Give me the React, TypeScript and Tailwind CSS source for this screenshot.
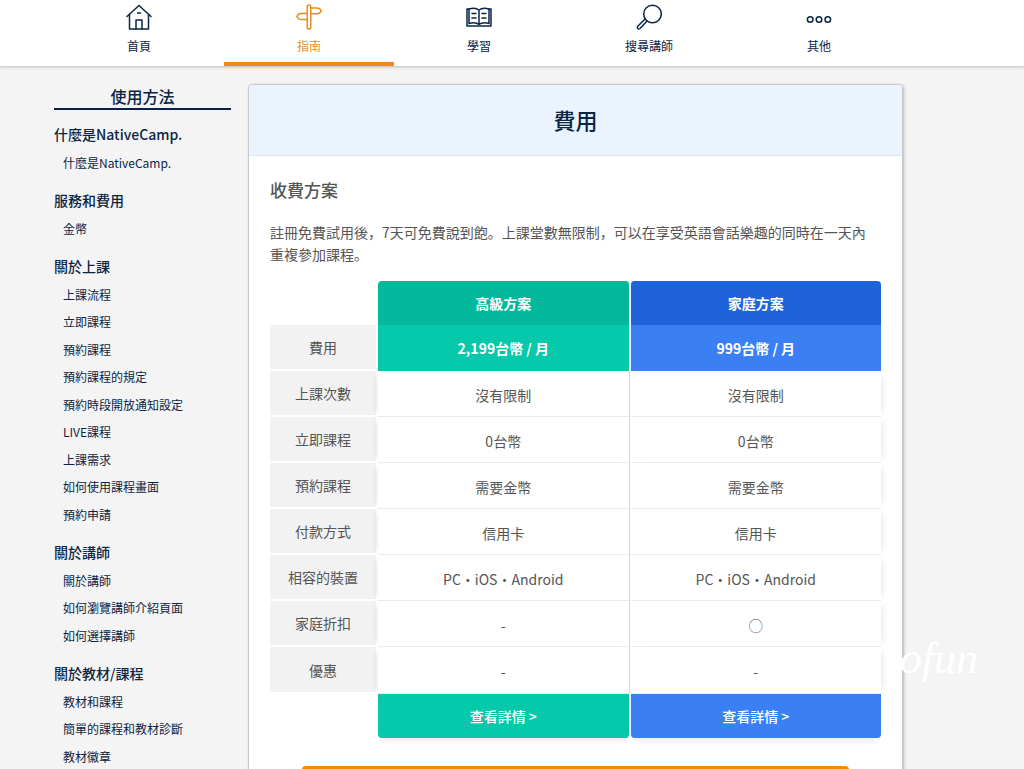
import type { ReactNode } from "react";
import { clsx } from "clsx";

interface NavItem {
  label: string;
  icon: ReactNode;
  active?: boolean;
}

interface MenuGroup {
  title: string;
  items: string[];
}

interface PlanRow {
  label: string;
  premium: string;
  family: string;
}

const navItems: NavItem[] = [
  {
    label: "首頁",
    icon: (
      <>
        <path d="M1 12.5 13 1.5l12 11" />
        <path d="M3.5 10.5V25h19V10.5" />
        <path d="M10 25v-9h6v9" />
        <path d="M11.5 9h3" />
      </>
    ),
  },
  {
    label: "指南",
    active: true,
    icon: (
      <>
        <rect x="11.2" y="1" width="3.6" height="24" rx="1.8" />
        <path d="M14.800 4h6.200c2.200 0 3.400 1.200 4.200 2.800-1 2-2 3-4.200 3h-6.200" />
        <path d="M11.200 9.500H5c-2.200 0-3.400 1.200-4.200 3 1 1.800 2 2.900 4.200 2.900h6.200" />
      </>
    ),
  },
  {
    label: "學習",
    icon: (
      <>
        <path d="M3 5H1v17h24V5h-2" />
        <path d="M13 6c-2.500-2-6.500-2-10-1v14.500c3.500-1 7.500-1 10 1 2.500-2 6.500-2 10-1V5c-3.500-1-7.500-1-10 1v14.500" />
        <path d="M6 9.500h4M6 14h4M16 9.500h4M16 14h4" />
      </>
    ),
  },
  {
    label: "搜尋講師",
    icon: (
      <>
        <circle cx="16.500" cy="10" r="8.800" />
        <path d="M9 15l-7.200 7.300c-1.200 1.600.6 3.400 2.200 2.200L11 17" />
      </>
    ),
  },
  {
    label: "其他",
    icon: (
      <>
        <circle cx="4.200" cy="15.500" r="2.800" />
        <circle cx="13" cy="15.500" r="2.800" />
        <circle cx="21.800" cy="15.500" r="2.800" />
      </>
    ),
  },
];

const menuGroups: MenuGroup[] = [
  { title: "什麼是NativeCamp.", items: ["什麼是NativeCamp."] },
  { title: "服務和費用", items: ["金幣"] },
  {
    title: "關於上課",
    items: [
      "上課流程",
      "立即課程",
      "預約課程",
      "預約課程的規定",
      "預約時段開放通知設定",
      "LIVE課程",
      "上課需求",
      "如何使用課程畫面",
      "預約申請",
    ],
  },
  { title: "關於講師", items: ["關於講師", "如何瀏覽講師介紹頁面", "如何選擇講師"] },
  { title: "關於教材/課程", items: ["教材和課程", "簡單的課程和教材診斷", "教材徽章"] },
];

const planRows: PlanRow[] = [
  { label: "上課次數", premium: "沒有限制", family: "沒有限制" },
  { label: "立即課程", premium: "0台幣", family: "0台幣" },
  { label: "預約課程", premium: "需要金幣", family: "需要金幣" },
  { label: "付款方式", premium: "信用卡", family: "信用卡" },
  { label: "相容的裝置", premium: "PC・iOS・Android", family: "PC・iOS・Android" },
  { label: "家庭折扣", premium: "-", family: "◯" },
  { label: "優惠", premium: "-", family: "-" },
];

const labelCell = "border-b-2 border-r-2 border-white bg-[#f2f2f2] p-0 font-normal";
const premiumCell =
  "border-b border-r border-b-[#ececec] border-r-[#d4d4d4] bg-white p-0 pt-0.5 shadow-[-5px_0_7px_-5px_rgba(0,0,0,0.15)]";
const familyCell =
  "border-b border-l border-b-[#ececec] border-l-white bg-white p-0 pt-0.5 shadow-[5px_0_7px_-5px_rgba(0,0,0,0.15)]";

function GlobalNav() {
  return (
    <header className="border-b border-[#cfcfcf] bg-white pl-[54px] pr-[120px] shadow-sm">
      <nav className="grid grid-cols-5">
        {navItems.map((item) => (
          <a
            key={item.label}
            href="#"
            className={clsx(
              "flex h-[66px] flex-col items-center border-b-4 pt-1 text-xs",
              item.active
                ? "border-[#f0891a] text-[#e8901f]"
                : "border-transparent text-[#0b2545]"
            )}
          >
            <svg
              viewBox="0 0 26 26"
              className="h-[26px] w-[26px]"
              fill="none"
              stroke="currentColor"
              strokeWidth="1.5"
              strokeLinecap="round"
              strokeLinejoin="round"
              aria-hidden="true"
            >
              {item.icon}
            </svg>
            <span className="mt-2 leading-4">{item.label}</span>
          </a>
        ))}
      </nav>
    </header>
  );
}

function SideMenu() {
  return (
    <aside className="w-[177px] shrink-0 text-[#0b2545]">
      <h2 className="border-b-2 border-[#0b1f48] text-center text-base font-medium leading-6">
        使用方法
      </h2>
      {menuGroups.map((group) => (
        <section key={group.title} className="pt-3">
          <h3 className="text-sm font-medium leading-6">{group.title}</h3>
          <ul className="pl-[9px] pt-[3px] text-xs">
            {group.items.map((item) => (
              <li key={item} className="leading-[27px] even:leading-7">
                <a href="#" className="hover:underline">
                  {item}
                </a>
              </li>
            ))}
          </ul>
        </section>
      ))}
    </aside>
  );
}

function PlanTable() {
  return (
    <table className="mt-4 w-full table-fixed border-separate border-spacing-0 text-center text-sm text-[#555]">
      <colgroup>
        <col className="w-[108px]" />
        <col />
        <col />
      </colgroup>
      <thead>
        <tr className="h-11 text-white">
          <td />
          <th scope="col" className="rounded-t border-r border-white bg-[#04b99b] p-0 font-bold">
            高級方案
          </th>
          <th scope="col" className="rounded-t border-l border-white bg-[#1e63dc] p-0 font-bold">
            家庭方案
          </th>
        </tr>
      </thead>
      <tbody>
        <tr className="h-[46px]">
          <th scope="row" className={labelCell}>
            費用
          </th>
          <td className="border-r border-white bg-[#05c9aa] p-0 font-bold text-white">
            2,199台幣 / 月
          </td>
          <td className="border-l border-white bg-[#3b7ff5] p-0 font-bold text-white">
            999台幣 / 月
          </td>
        </tr>
        {planRows.map((row) => (
          <tr key={row.label} className="h-[46px] last:h-[47px]">
            <th scope="row" className={labelCell}>
              {row.label}
            </th>
            <td className={premiumCell}>{row.premium}</td>
            <td className={familyCell}>{row.family}</td>
          </tr>
        ))}
      </tbody>
      <tfoot>
        <tr className="h-11 text-white">
          <td />
          <td className="rounded-b border-r border-white bg-[#05c9aa] p-0 font-medium shadow-[0_5px_7px_-4px_rgba(0,0,0,0.12)]">
            <a href="#" className="block leading-[44px]">
              查看詳情 &gt;
            </a>
          </td>
          <td className="rounded-b border-l border-white bg-[#3b7ff5] p-0 font-medium shadow-[0_5px_7px_-4px_rgba(0,0,0,0.12)]">
            <a href="#" className="block leading-[44px]">
              查看詳情 &gt;
            </a>
          </td>
        </tr>
      </tfoot>
    </table>
  );
}

export default function App() {
  return (
    <div className="relative h-screen overflow-hidden bg-[#f4f4f4] font-['Noto_Sans_CJK_JP','Noto_Sans_CJK_TC',sans-serif]">
      <GlobalNav />
      <div className="flex items-start gap-[17px] pl-[54px] pr-[121px] pt-[17px]">
        <SideMenu />
        <main className="min-w-0 flex-1 overflow-hidden rounded border border-[#c9c9c9] bg-white shadow-[1px_1px_3px_rgba(0,0,0,0.25)]">
          <h1 className="border-b border-[#dbe6f3] bg-[#eaf3fe] pb-0.5 text-center text-[22px] font-medium leading-[68px] text-[#0b2545]">
            費用
          </h1>
          <div className="px-[21px] pb-10 pt-[19px]">
            <h2 className="text-[17px] font-medium leading-[30px] text-[#555]">收費方案</h2>
            <p className="mt-4 pr-2 text-sm leading-[22px] text-[#555]">
              註冊免費試用後，7天可免費說到飽。上課堂數無限制，可以在享受英語會話樂趣的同時在一天內重複參加課程。
            </p>
            <PlanTable />
            <div className="px-8 pt-7">
              <button
                type="button"
                aria-label="免費試用"
                className="block h-12 w-full rounded bg-[#f28a0f]"
              />
            </div>
          </div>
        </main>
      </div>
      <span className="pointer-events-none absolute right-[46px] top-[632px] font-['Liberation_Serif',serif] text-[44px] italic leading-[54px] text-white">
        ofun
      </span>
    </div>
  );
}
